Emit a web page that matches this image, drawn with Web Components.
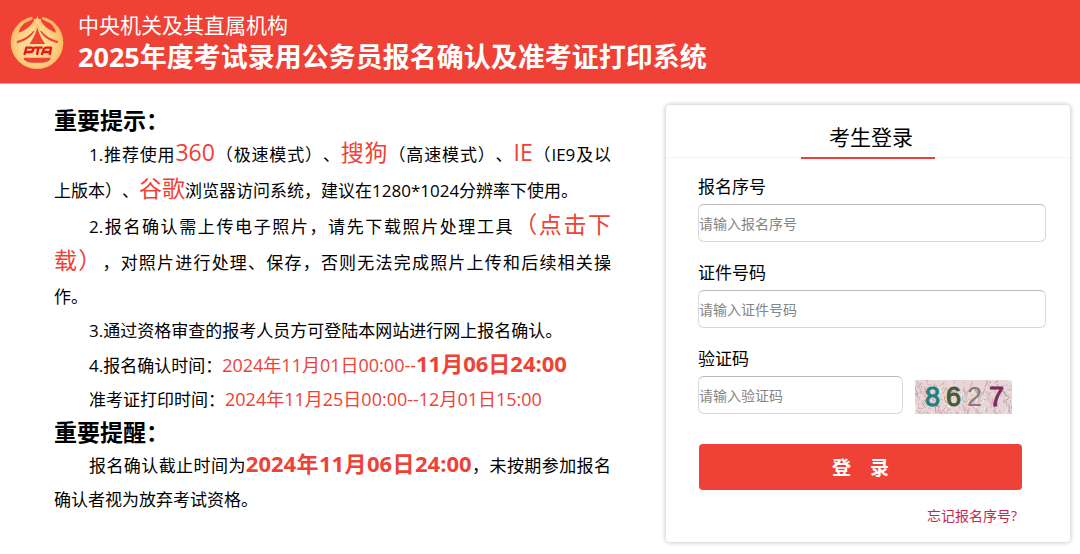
<!DOCTYPE html>
<html lang="zh-CN">
<head>
<meta charset="utf-8">
<meta name="viewport" content="width=device-width, initial-scale=1">
<title>考试录用公务员报名确认及准考证打印系统</title>
<style>
body { margin: 0; background: #fff; color: #000; font-family: "Open Sans", "Noto Sans CJK SC", sans-serif; font-size: 17px; text-spacing-trim: space-all; --brand: #ef4136; }
</style>
</head>
<body>
<exam-page></exam-page>
<script>
function define(name, html, setup) {
  const template = document.createElement('template');
  template.innerHTML = html;
  customElements.define(name, class extends HTMLElement {
    constructor() {
      super();
      this.attachShadow({ mode: 'open' }).append(template.content.cloneNode(true));
    }
    connectedCallback() { if (setup) setup.call(this, this.shadowRoot); }
  });
}

define('pta-logo', `
<style>:host { display: block; width: 75px; height: 70px; } svg { display: block; width: 100%; height: 100%; }</style>
<svg viewBox="0 0 225 210" role="img" aria-label="PTA">
  <defs><radialGradient id="g" cx=".48" cy=".55" r=".55"><stop offset="0" stop-color="#ffe3a0"/><stop offset=".6" stop-color="#ffd489"/><stop offset="1" stop-color="#fbb45a"/></radialGradient></defs>
  <circle cx="111" cy="107" r="79" fill="url(#g)"/>
  <g fill="#ef4136">
    <path d="M96 24H128L126 35H98Z"/>
    <path d="M99 34C94 42 79 43 70 52C60 62 57 70 56 77C77 70 94 57 102 39Z"/>
    <path d="M125 34C130 42 145 43 154 52C164 62 167 70 168 77C147 70 130 57 122 39Z"/>
    <path d="M108 54C101 79 79 94 50 102L51 109C83 101 101 84 109 61Z"/>
    <path d="M116 54C123 79 145 94 174 102L173 109C141 101 123 84 115 61Z"/>
    <path d="M112 60C107 82 99 96 88 111H136C125 96 117 82 112 60Z"/>
    <path d="M71 152H152L151 158Q143 165 130 167H93Q79 165 72 158Z"/>
  </g>
  <path d="M112 24C109 42 104 57 94 69L103 73C108 65 111 57 112 49C113 57 116 65 121 73L130 69C120 57 115 42 112 24Z" fill="#ffd489"/>
  <g fill="none" stroke="#ee1414" stroke-width="7" stroke-linejoin="round">
    <path d="M73 144L79 122H96Q101 123 100 128Q98 135 91 135H78M102 122H128M115 122L111 144M125 144L132 126Q134 122 139 122H153L149 144M128 135H149"/>
  </g>
</svg>`);

define('site-header', `
<style>
:host { display: flex; align-items: center; height: 84px; background: var(--brand); color: #fff; border-bottom: 1px solid #f7a09a; box-sizing: border-box; }
.titles { flex: 1; padding: 0 16px 0 3px; }
p, h1 { margin: 0; font-weight: 400; }
p { font-size: 21px; line-height: 30px; }
h1 { font-size: 27px; line-height: 34px; font-weight: 700; }
</style>
<pta-logo></pta-logo>
<div class="titles"><p><slot name="org"></slot></p><h1><slot></slot></h1></div>`);

define('notice-panel', `
<style>
:host { display: block; }
h2 { margin: 0; font-size: 23px; line-height: 31px; font-weight: 700; }
p { margin: 0; text-indent: 35px; line-height: 34px; text-align: justify; }
.full { display: block; text-align-last: justify; }
.rest { display: block; text-indent: 0; }
.full + .full { text-indent: 0; }
em, strong, a, time { font-style: normal; color: var(--brand); text-decoration: none; }
em, a { font-size: 23px; line-height: 32px; }
time { font-size: 18px; line-height: 30px; }
strong { font-size: 22px; line-height: 30px; }
</style>
<h2>重要提示：</h2>
<p><span class="full">1.推荐使用<em>360</em>（极速模式）、<em>搜狗</em>（高速模式）、<em>IE</em>（IE9及以</span><span class="rest">上版本）、<em>谷歌</em>浏览器访问系统，建议在1280*1024分辨率下使用。</span></p>
<p><span class="full">2.报名确认需上传电子照片，请先下载照片处理工具<a href="#tool">（点击下</a></span><span class="full"><a href="#tool">载）</a>，对照片进行处理、保存，否则无法完成照片上传和后续相关操</span><span class="rest">作。</span></p>
<p>3.通过资格审查的报考人员方可登陆本网站进行网上报名确认。</p>
<p>4.报名确认时间：<time>2024年11月01日00:00--<strong>11月06日24:00</strong></time></p>
<p>准考证打印时间：<time>2024年11月25日00:00--12月01日15:00</time></p>
<h2>重要提醒：</h2>
<p><span class="full">报名确认截止时间为<strong>2024年11月06日24:00</strong>，未按期参加报名</span><span class="rest">确认者视为放弃考试资格。</span></p>`);

define('form-field', `
<style>
:host { display: block; }
label { display: block; line-height: 34px; font-size: 17px; }
.row { display: flex; align-items: flex-end; gap: 12px; }
input { flex: 1; min-width: 0; height: 38px; box-sizing: border-box; margin: 0; padding: 0; border: 1px solid #d9d9d9; border-top-color: #b8b8b8; border-radius: 6px; background: #fff; font: 14px "Open Sans", "Noto Sans CJK SC", sans-serif; color: #000; }
input::placeholder { color: #858585; opacity: 1; }
</style>
<label for="box"></label>
<div class="row"><input id="box" type="text"><slot></slot></div>`, function (root) {
  root.querySelector('label').textContent = this.getAttribute('label');
  root.querySelector('input').placeholder = '请输入' + this.getAttribute('label');
});

define('captcha-image', `
<style>:host { display: block; width: 97px; height: 34px; } svg { display: block; width: 100%; height: 100%; } text { font: 27px "Liberation Sans", sans-serif; }</style>
<svg viewBox="0 0 97 34">
  <rect width="97" height="34" fill="#e6d6d5"/>
  <g id="noise" fill="none" stroke-width="1"></g>
  <text x="10" y="26" fill="#1e7f80" stroke="#1e7f80">8</text>
  <text x="31" y="26" fill="#445b38" stroke="#445b38">6</text>
  <text x="52" y="26" fill="#8c7779">2</text>
  <text x="74" y="26" fill="#7b285f" stroke="#7b285f">7</text>
</svg>`, function (root) {
  // Short crossing strokes, from a fixed seed
  let seed = 41;
  const next = () => (seed = (seed * 16807) % 2147483647) / 2147483647;
  const inks = ['#d9a9b8', '#c4adac', '#cbb4b4', '#dfb4c4', '#f5ecec', '#bd9fa3'];
  let out = '';
  for (let i = 0; i < 230; i++) {
    const x = Math.floor(next() * 97), y = Math.floor(next() * 34);
    const dx = Math.floor(next() * 9) - 3, dy = Math.floor(next() * 7) + 1;
    out += '<path d="M' + x + ' ' + y + 'l' + dx + ' ' + dy + '" stroke="' + inks[Math.floor(next() * 6)] + '"/>';
  }
  root.getElementById('noise').innerHTML = out;
});

define('login-card', `
<style>
:host { display: block; box-sizing: border-box; border-radius: 4px; background: #fff; box-shadow: 0 0 4px 1px rgba(0,0,0,.2); padding-bottom: 14px; }
header { display: flex; justify-content: center; height: 52px; border-bottom: 1px solid #f2f2f2; }
h2 { margin: 0 0 -2px; padding: 14px 21px 0 27px; font-size: 21px; line-height: 36px; font-weight: 400; border-bottom: 2px solid var(--brand); width: 86px; text-align: center; }
form { display: grid; gap: 14px; padding: 12px 24px 0 32px; }
.code { width: 314px; max-width: 100%; }
button { height: 46px; margin: 16px 24px 0 1px; padding: 0; border: 0; border-radius: 4px; background: var(--brand); color: #fff; font: 700 19px "Open Sans", "Noto Sans CJK SC", sans-serif; }
a { justify-self: end; margin-right: 29px; font-size: 14px; line-height: 24px; color: #c7254e; text-decoration: none; }
</style>
<header><h2>考生登录</h2></header>
<form>
  <form-field label="报名序号"></form-field>
  <form-field label="证件号码"></form-field>
  <form-field label="验证码" class="code"><captcha-image></captcha-image></form-field>
  <button type="button">登&emsp;录</button>
  <a href="#forgot">忘记报名序号?</a>
</form>`);

define('exam-page', `
<style>
:host { display: block; }
main { display: grid; grid-template-columns: minmax(0, 557fr) minmax(0, 404fr); gap: 55px; align-items: start; padding: 21px 10px 11px 54px; }
</style>
<site-header><span slot="org">中央机关及其直属机构</span>2025年度考试录用公务员报名确认及准考证打印系统</site-header>
<main><notice-panel></notice-panel><login-card></login-card></main>`);
</script>
</body>
</html>
